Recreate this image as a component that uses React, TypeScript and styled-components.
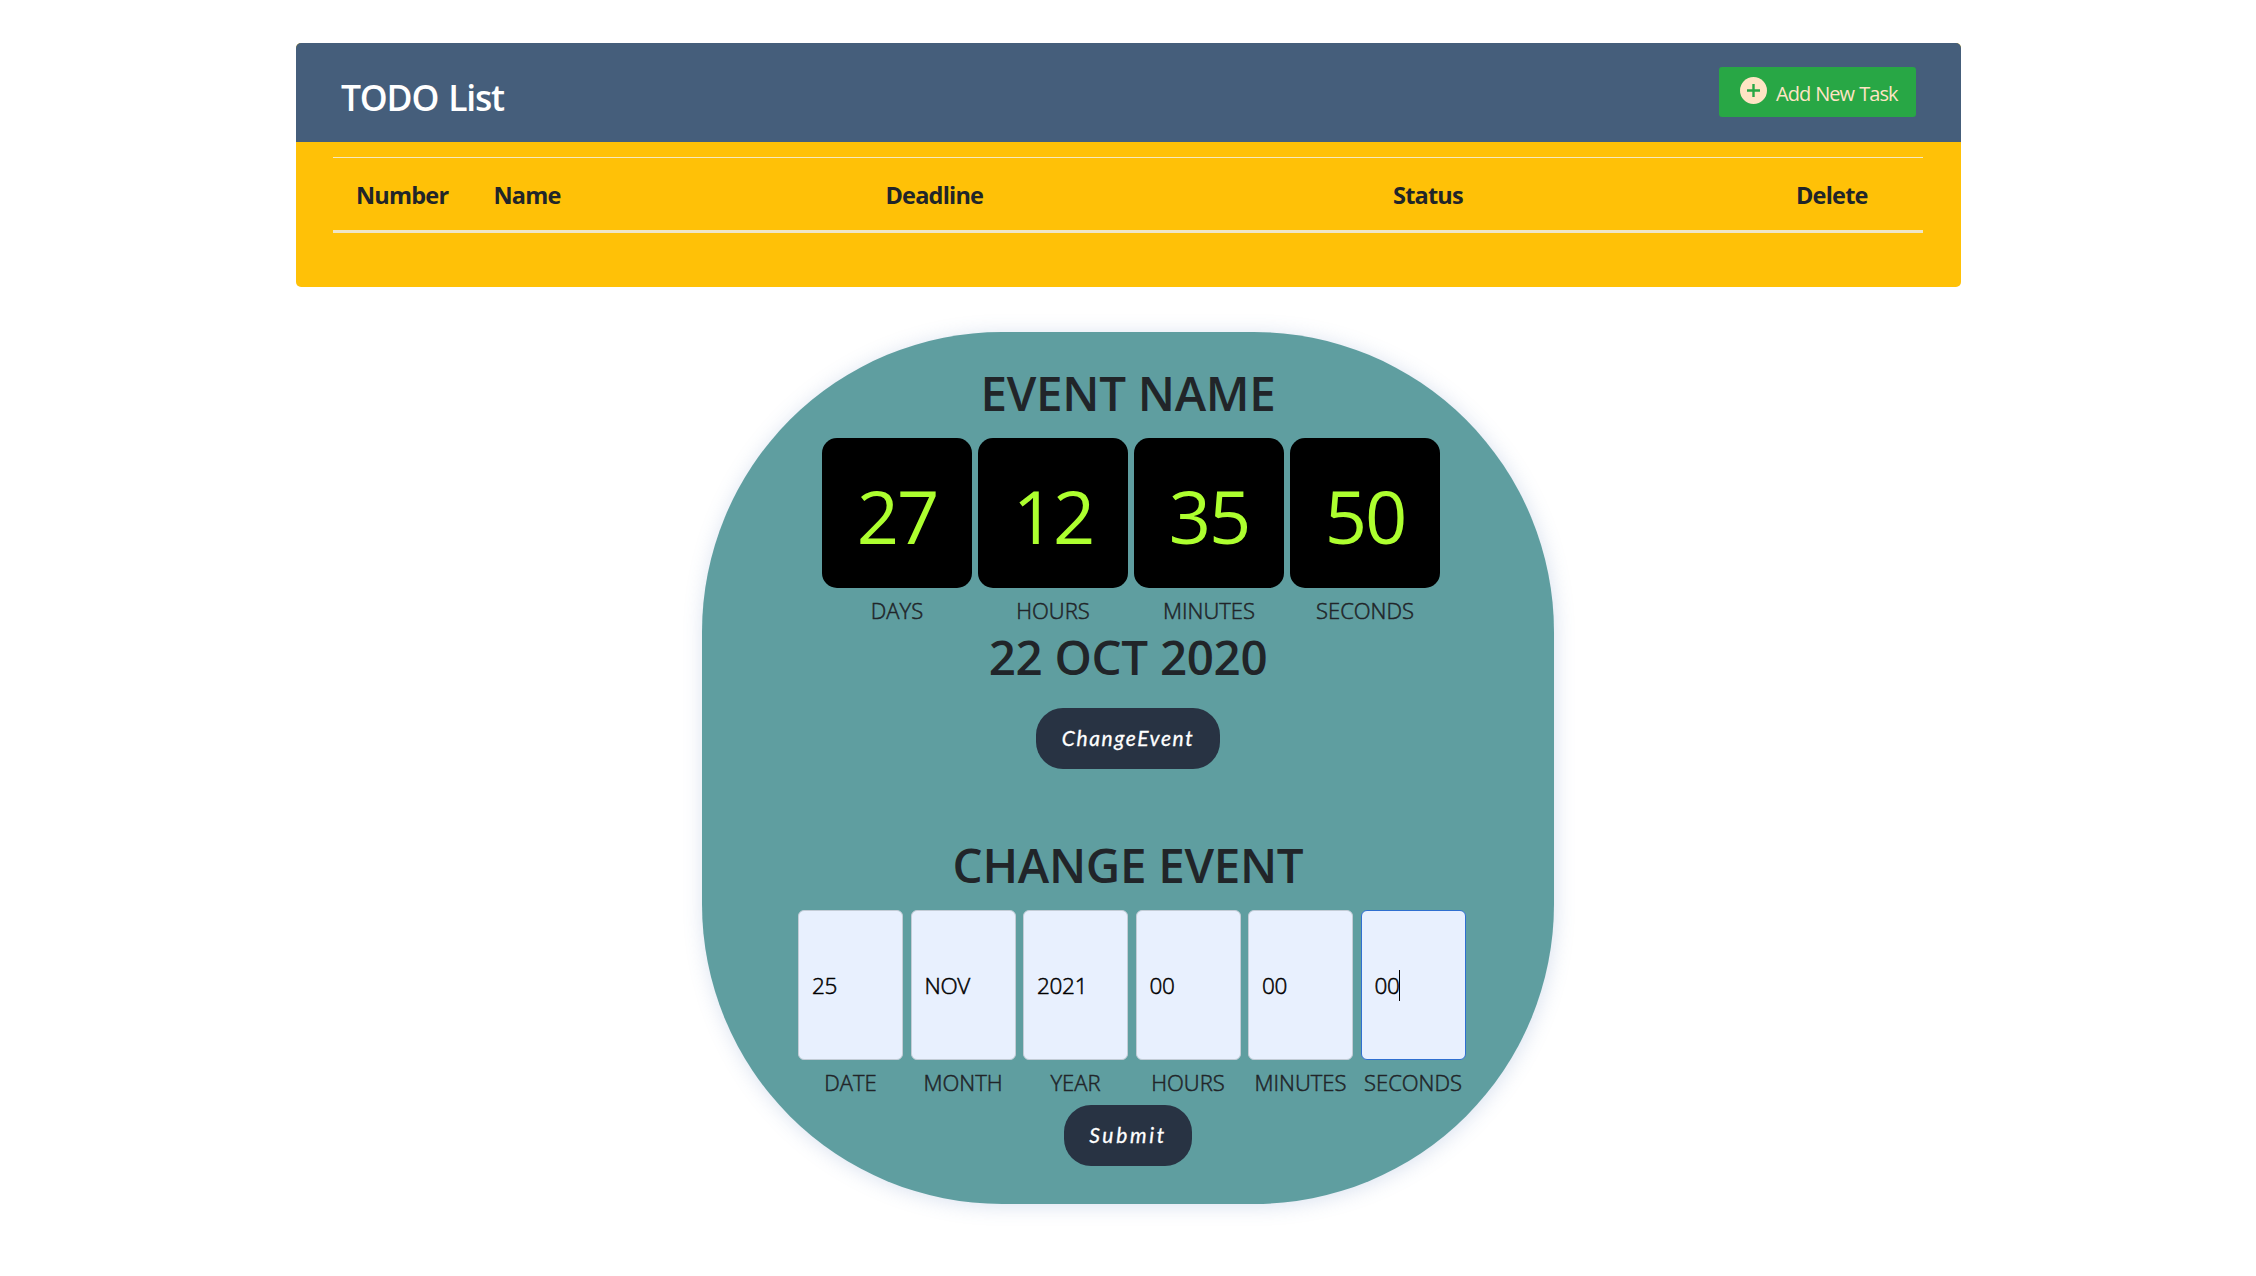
import React from "react";
import styled, { createGlobalStyle } from "styled-components";

const GlobalStyle = createGlobalStyle`
  *, *::before, *::after { box-sizing: border-box; }
  body {
    margin: 0;
    background: #fff;
    color: #212529;
    font-family: "Open Sans", "Noto Sans", sans-serif;
  }
  h1, h2, p { margin: 0; }
`;

const Page = styled.main`
  display: flex;
  flex-direction: column;
  align-items: center;
  gap: 45px;
  padding: 43px 0 72px;
`;

const TodoCard = styled.section`
  width: 1665px;
  height: 244px;
  margin-left: 1px;
  border-radius: 5px;
  overflow: hidden;
  background: #ffc107;
`;

const TodoHeader = styled.header`
  display: flex;
  justify-content: space-between;
  align-items: flex-start;
  height: 99px;
  padding: 24px 45px 0;
  background: #455e7b;
`;

const TodoTitle = styled.h2`
  margin-top: 8px;
  color: #fff;
  font-size: 35.5px;
  line-height: 44px;
  font-weight: 600;
  letter-spacing: -1.2px;
  word-spacing: 2px;
`;

const AddButton = styled.button`
  display: flex;
  align-items: center;
  gap: 9px;
  width: 197px;
  height: 50px;
  padding: 0 0 0 21px;
  border: 0;
  border-radius: 3px;
  background: #28a745;
  color: #ffe4c4;
  font: inherit;
  font-size: 20px;
  letter-spacing: -1px;
  word-spacing: 1px;
  white-space: nowrap;
`;

const AddIcon = styled.svg`
  flex: none;
  width: 27px;
  height: 27px;
  margin-bottom: 3px;
`;

const AddLabel = styled.span`
  margin-top: 2px;
`;

const TaskTable = styled.div`
  display: grid;
  grid-template-columns: 137.5px 392px 507.5px 403px 150px;
  width: 1590px;
  height: 76px;
  margin: 15px 0 0 37px;
  border-top: 1px solid #f6e9c0;
  border-bottom: 3px solid #efe6c6;
`;

const HeadCell = styled.div`
  padding: 1px 0 0 23px;
  font-size: 23.5px;
  font-weight: 700;
  line-height: 72px;
  letter-spacing: -0.8px;
`;

const EventPanel = styled.section`
  display: flex;
  flex-direction: column;
  align-items: center;
  width: 852px;
  height: 872px;
  padding-top: 32px;
  border-radius: 300px;
  background: #5f9ea0;
  box-shadow: 1px 2px 20px rgba(80, 120, 180, 0.22);
`;

const Heading = styled.h1`
  font-size: 47.5px;
  line-height: 58px;
  font-weight: 600;
  letter-spacing: -0.3px;
`;

const DateHeading = styled(Heading)`
  margin-top: 1px;
`;

const FormHeading = styled(Heading)`
  margin-top: 67px;
`;

const Units = styled.div<{ $gap: number; $shift: number; $top: number }>`
  display: flex;
  gap: ${(p) => p.$gap}px;
  margin: ${(p) => p.$top}px 0 0 ${(p) => p.$shift}px;
`;

const Unit = styled.div`
  display: flex;
  flex-direction: column;
  align-items: center;
  gap: 5px;
`;

const UnitLabel = styled.p`
  font-size: 22px;
  font-weight: 300;
  line-height: 34px;
  -webkit-text-stroke: 0.5px #212529;
`;

const Digits = styled.div`
  width: 150px;
  height: 150px;
  padding-top: 3px;
  border-radius: 15px;
  background: #000;
  color: #adff2f;
  font-size: 74px;
  line-height: 150px;
  letter-spacing: -2px;
  text-align: center;
`;

const Field = styled.div<{ $focused: boolean }>`
  display: flex;
  align-items: center;
  width: 105px;
  height: 150px;
  padding: 1px 0 0 13px;
  border: 1px solid ${(p) => (p.$focused ? "#2f6fd0" : "#c3ccd6")};
  border-radius: 6px;
  background: #e8f0fe;
  color: #000;
  font-size: 22.5px;
  font-weight: 300;
  letter-spacing: -0.3px;
  -webkit-text-stroke: 0.5px #000;
`;

const Caret = styled.span`
  width: 1px;
  height: 31px;
  margin-left: -1px;
  background: #000;
`;

const PillButton = styled.button<{ $width: number; $top: number; $spacing: number }>`
  width: ${(p) => p.$width}px;
  height: 61px;
  margin-top: ${(p) => p.$top}px;
  padding: 0 0 3px;
  border: 0;
  border-radius: 27px;
  background: #283343;
  color: #fff;
  font-family: "Bradley Hand ITC", "Segoe Print", Lato, sans-serif;
  font-size: 21px;
  font-style: italic;
  letter-spacing: ${(p) => p.$spacing}px;
  -webkit-text-stroke: 0.3px #fff;
`;

const columns = ["Number", "Name", "Deadline", "Status", "Delete"];

const countdown = [
  { label: "DAYS", value: "27" },
  { label: "HOURS", value: "12" },
  { label: "MINUTES", value: "35" },
  { label: "SECONDS", value: "50" },
];

const fields = [
  { label: "DATE", value: "25" },
  { label: "MONTH", value: "NOV" },
  { label: "YEAR", value: "2021" },
  { label: "HOURS", value: "00" },
  { label: "MINUTES", value: "00" },
  { label: "SECONDS", value: "00", focused: true },
];

export default function App() {
  return (
    <>
      <GlobalStyle />
      <Page>
        <TodoCard>
          <TodoHeader>
            <TodoTitle>TODO List</TodoTitle>
            <AddButton>
              <AddIcon viewBox="0 0 27 27">
                <circle cx="13.5" cy="13.5" r="13.5" fill="#ffe4c4" />
                <path d="M13.5 7v13M7 13.5h13" stroke="#28a745" strokeWidth="2.4" />
              </AddIcon>
              <AddLabel>Add New Task</AddLabel>
            </AddButton>
          </TodoHeader>
          <TaskTable>
            {columns.map((name) => (
              <HeadCell key={name}>{name}</HeadCell>
            ))}
          </TaskTable>
        </TodoCard>

        <EventPanel>
          <Heading>EVENT NAME</Heading>
          <Units $gap={6} $shift={6} $top={16}>
            {countdown.map(({ label, value }) => (
              <Unit key={label}>
                <Digits>{value}</Digits>
                <UnitLabel>{label}</UnitLabel>
              </Unit>
            ))}
          </Units>
          <DateHeading>22 OCT 2020</DateHeading>
          <PillButton $width={184} $top={22} $spacing={1.6}>ChangeEvent</PillButton>

          <FormHeading>CHANGE EVENT</FormHeading>
          <Units $gap={7.5} $shift={7.5} $top={16}>
            {fields.map(({ label, value, focused }) => (
              <Unit key={label}>
                <Field $focused={!!focused}>
                  {value}
                  {focused && <Caret />}
                </Field>
                <UnitLabel>{label}</UnitLabel>
              </Unit>
            ))}
          </Units>
          <PillButton $width={128} $top={6} $spacing={2.7}>Submit</PillButton>
        </EventPanel>
      </Page>
    </>
  );
}
